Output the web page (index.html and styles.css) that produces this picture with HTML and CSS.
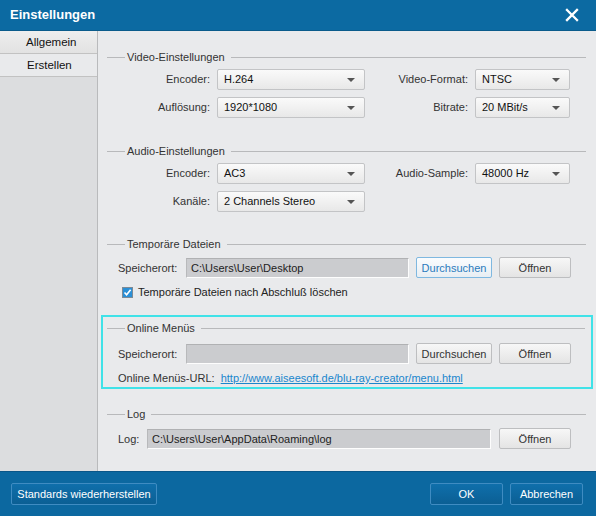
FILE: index.html
```html
<!DOCTYPE html>
<html>
<head>
  <title>Einstellungen</title>
  <link rel="stylesheet" href="styles.css">
</head>

<body>
  <div class="window">
    <div class="titlebar">
      <span class="title">Einstellungen</span>
      <svg class="close" width="14" height="14" viewBox="0 0 14 14">
        <path d="M2 2 L12 12 M12 2 L2 12" stroke="#fff" stroke-width="2.3" stroke-linecap="square"/>
      </svg>
    </div>

    <div class="main">
      <div class="sidebar">
        <div class="tab">Allgemein</div>
        <div class="tab active">Erstellen</div>
      </div>

      <div class="content">
        <!-- Video -->
        <div class="group video">
          <div class="legend"><span>Video-Einstellungen</span></div>
          <div class="grid">
            <label>Encoder:</label>
            <div class="select">H.264</div>
            <label>Video-Format:</label>
            <div class="select">NTSC</div>
            <label>Auflösung:</label>
            <div class="select">1920*1080</div>
            <label>Bitrate:</label>
            <div class="select">20 MBit/s</div>
          </div>
        </div>

        <!-- Audio -->
        <div class="group audio">
          <div class="legend"><span>Audio-Einstellungen</span></div>
          <div class="grid">
            <label>Encoder:</label>
            <div class="select">AC3</div>
            <label>Audio-Sample:</label>
            <div class="select">48000 Hz</div>
            <label>Kanäle:</label>
            <div class="select">2 Channels Stereo</div>
          </div>
        </div>

        <!-- Temp -->
        <div class="group temp">
          <div class="legend"><span>Temporäre Dateien</span></div>
          <div class="row">
            <label class="plain">Speicherort:</label>
            <div class="input path">C:\Users\User\Desktop</div>
            <button class="btn focus">Durchsuchen</button>
            <button class="btn open">Öffnen</button>
          </div>
          <div class="check-row">
            <span class="checkbox">
              <svg width="9" height="9" viewBox="0 0 9 9"><path d="M1.5 4.5 L3.6 6.8 L7.6 1.8" stroke="#fff" stroke-width="1.6" fill="none"/></svg>
            </span>
            Temporäre Dateien nach Abschluß löschen
          </div>
        </div>

        <!-- Online -->
        <div class="group online">
          <div class="legend"><span>Online Menüs</span></div>
          <div class="row">
            <label class="plain">Speicherort:</label>
            <div class="input path"></div>
            <button class="btn">Durchsuchen</button>
            <button class="btn open">Öffnen</button>
          </div>
          <div class="url-row">
            Online Menüs-URL:
            <a href="#">http://www.aiseesoft.de/blu-ray-creator/menu.html</a>
          </div>
        </div>

        <!-- Log -->
        <div class="group log">
          <div class="legend"><span>Log</span></div>
          <div class="row">
            <label class="plain">Log:</label>
            <div class="input logpath">C:\Users\User\AppData\Roaming\log</div>
            <button class="btn open">Öffnen</button>
          </div>
        </div>
      </div>
    </div>

    <div class="footer">
      <button class="fbtn reset">Standards wiederherstellen</button>
      <div class="spacer"></div>
      <button class="fbtn ok">OK</button>
      <button class="fbtn cancel">Abbrechen</button>
    </div>
  </div>
</body>
</html>
```

FILE: styles.css
```css
body {
  margin: 0;
  font-family: 'Liberation Sans', Arial, sans-serif;
  font-size: 11px;
  color: #222;
  background: #e9eaec;
}
.window {
  width: 596px;
  height: 516px;
  display: flex;
  flex-direction: column;
  overflow: hidden;
}
.titlebar {
  height: 31px;
  background: #0c6aa2;
  display: flex;
  align-items: center;
  padding: 0 0 0 10px;
  box-sizing: border-box;
  border-bottom: 1px solid #0a5b8b;
}
.title {
  color: #fff;
  font-weight: bold;
  font-size: 13px;
  flex: 1;
  padding-bottom: 1px;
}
.close {
  margin-right: 17px;
}
.main {
  flex: 1;
  display: flex;
}
.sidebar {
  width: 97px;
  background: #dcdddf;
  border-right: 1px solid #b9babc;
}
.tab {
  height: 22px;
  line-height: 22px;
  padding-left: 26px;
  font-size: 11.5px;
  color: #111;
  background: linear-gradient(#eeeeee, #e2e2e2);
  border-bottom: 1px solid #c2c2c2;
}
.tab.active {
  background: #e9eaec;
  padding-left: 27px;
}
.content {
  flex: 1;
  padding: 19px 0 0 9px;
  box-sizing: border-box;
}
.legend {
  display: flex;
  align-items: center;
  height: 14px;
  margin-right: 10px;
  color: #333;
}
.legend::before {
  content: '';
  width: 18px;
  border-top: 1px solid #b8b9bb;
  margin-right: 2px;
}
.legend::after {
  content: '';
  flex: 1;
  border-top: 1px solid #b8b9bb;
  margin-left: 6px;
}
.grid {
  display: grid;
  grid-template-columns: 104px 148px 98px 95px;
  column-gap: 6px;
  row-gap: 7px;
  margin-top: 5px;
}
.grid label {
  text-align: right;
  line-height: 21px;
  color: #333;
  padding-right: 1px;
}
.select {
  height: 21px;
  line-height: 19px;
  box-sizing: border-box;
  border: 1px solid #c3c4c6;
  border-radius: 2px;
  background: linear-gradient(#fafafa, #e8e8e8);
  padding-left: 6px;
  position: relative;
  color: #111;
}
.select::after {
  content: '';
  position: absolute;
  right: 9px;
  top: 8px;
  border-left: 4px solid transparent;
  border-right: 4px solid transparent;
  border-top: 4px solid #555;
}
.audio {
  margin-top: 26px;
}
.temp {
  margin-top: 25px;
}
.row {
  display: flex;
  align-items: center;
  height: 21px;
  padding-left: 11px;
  margin-top: 6px;
}
.row label.plain {
  width: 68px;
  color: #333;
}
.input {
  height: 20px;
  line-height: 19px;
  box-sizing: border-box;
  background: #cbcccf;
  border-top: 1px solid #b0b1b3;
  border-left: 1px solid #b8b9bb;
  border-right: 1px solid #fdfdfd;
  border-bottom: 1px solid #fdfdfd;
  padding-left: 4px;
  color: #222;
}
.input.path {
  width: 223px;
  margin-right: 7px;
}
.input.logpath {
  width: 344px;
  margin-right: 8px;
}
.btn {
  height: 21px;
  box-sizing: border-box;
  font-family: inherit;
  font-size: 11px;
  color: #333;
  border: 1px solid #bdbec0;
  border-radius: 2px;
  background: linear-gradient(#f7f7f7, #e4e4e4);
  padding: 0;
  width: 76px;
  margin-right: 7px;
}
.btn.open {
  width: 72px;
}
.btn.focus {
  border-color: #7fb8e0;
  color: #2b7bbd;
  background: linear-gradient(#fafcfe, #e8eef3);
}
.check-row {
  display: flex;
  align-items: center;
  height: 14px;
  margin-top: 7px;
  padding-left: 15px;
  color: #222;
}
.checkbox {
  width: 11px;
  height: 11px;
  box-sizing: border-box;
  border: 1px solid #7c8a96;
  background: #2a8fd6;
  display: flex;
  align-items: center;
  justify-content: center;
  margin-right: 5px;
}
.online {
  margin: 16px 3px 0 -6px;
  border: 2px solid #40e2e8;
  padding: 4px 0 2px 4px;
}
.online .legend {
  margin-right: 6px;
}
.online .row {
  margin-top: 8px;
}
.url-row {
  height: 14px;
  line-height: 14px;
  margin-top: 7px;
  padding-left: 11px;
  color: #333;
}
.url-row a {
  color: #1a86cc;
  margin-left: 3px;
}
.log {
  margin-top: 18px;
}
.log .row {
  margin-top: 7px;
}
.log .row label.plain {
  width: 29px;
}
.footer {
  height: 45px;
  background: #0c68a0;
  display: flex;
  align-items: center;
  padding: 0 13px 0 11px;
  box-sizing: border-box;
  border-top: 1px solid #0a5688;
}
.spacer {
  flex: 1;
}
.fbtn {
  height: 22px;
  box-sizing: border-box;
  font-family: inherit;
  font-size: 11px;
  color: #fff;
  background: linear-gradient(#0f6fab, #0b5f94);
  border: 1px solid #3f8cc2;
  border-radius: 2px;
  padding: 0;
}
.fbtn.reset {
  width: 146px;
}
.fbtn.ok {
  width: 73px;
  margin-right: 7px;
}
.fbtn.cancel {
  width: 73px;
}
```
